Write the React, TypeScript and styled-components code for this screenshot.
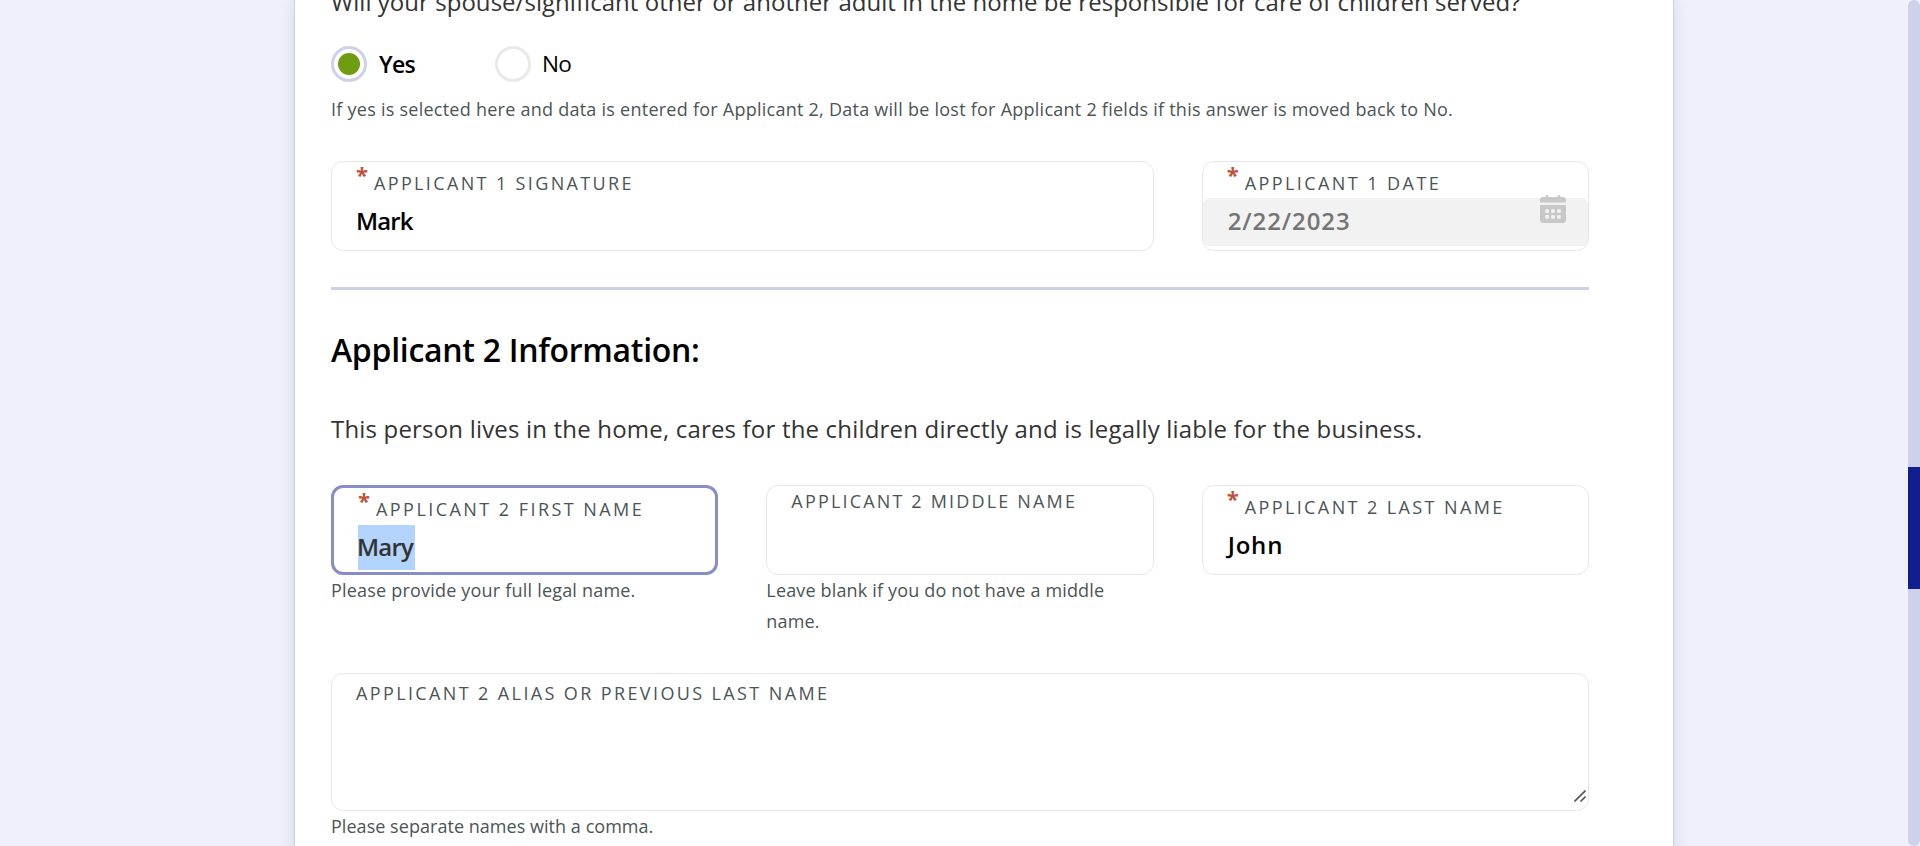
import React from 'react';
import styled, { createGlobalStyle } from 'styled-components';

const GlobalStyle = createGlobalStyle`
  * { box-sizing: border-box; }
  html, body { margin: 0; height: 100%; overflow: hidden; }
  body {
    background: #f0f0fa;
    color: #333;
    font-family: "Trebuchet MS", "Open Sans", sans-serif;
    font-size: 24px;
  }
`;

const Page = styled.div`
  display: flex;
  height: 846px;
  overflow: hidden;
`;

const Content = styled.div`
  flex: 1;
  display: flex;
  padding-left: 295px;
`;

const Card = styled.main`
  width: 1378px;
  height: 900px;
  flex: none;
  padding: 0 84px 0 36px;
  background: #fff;
  box-shadow: 0 0 0 1px #d0d0dc, 0 0 14px rgba(60, 60, 150, 0.16);
`;

const Scrollbar = styled.div`
  width: 12px;
  height: 846px;
  padding-top: 467px;
  border-radius: 6px;
  background: #cfd1e8;
`;

const Thumb = styled.div`
  height: 122px;
  background: #101e8e;
`;

const Paragraph = styled.p<{ $track: number }>`
  margin: 0;
  line-height: 36px;
  white-space: nowrap;
  letter-spacing: ${(p) => p.$track}px;
`;

const Question = styled(Paragraph)`
  margin-top: -16px;
`;

const Intro = styled(Paragraph)`
  margin: 39px 0 38px;
`;

const Heading = styled.h2`
  margin: 38px 0 0;
  color: #000;
  font-size: 32px;
  font-weight: 600;
  line-height: 44px;
  letter-spacing: -0.29px;
`;

const RadioGroup = styled.div`
  display: flex;
  margin: 26px 0 12px;
`;

const Option = styled.label<{ $checked?: boolean }>`
  display: flex;
  width: 164px;
  color: #000;
  font-size: ${(p) => (p.$checked ? 23 : 22.6)}px;
  font-weight: ${(p) => (p.$checked ? 600 : 400)};
  letter-spacing: -0.7px;
  line-height: 36px;
  gap: ${(p) => (p.$checked ? 12 : 11)}px;
`;

const Radio = styled.span<{ $checked?: boolean }>`
  display: grid;
  place-items: center;
  width: 36px;
  height: 36px;
  border: 3px solid ${(p) => (p.$checked ? '#cfd1e9' : '#e9e9e9')};
  border-radius: 50%;
  background: #fff;
`;

const Dot = styled.span`
  width: 22px;
  height: 22px;
  border-radius: 50%;
  background: #6f9c10;
`;

const Help = styled.p<{ $track: number }>`
  margin: 0;
  color: #4a5556;
  font-size: 18px;
  line-height: 31px;
  letter-spacing: ${(p) => p.$track}px;
`;

const FieldGrid = styled.div`
  display: grid;
  grid-template-columns: repeat(3, 1fr);
  column-gap: 48px;
`;

const SignatureRow = styled(FieldGrid)`
  margin-top: 36px;
`;

const AliasRow = styled.div`
  margin-top: 36px;
`;

const Cell = styled.div<{ $span?: number }>`
  grid-column: span ${(p) => p.$span ?? 1};
  min-width: 0;
`;

const Box = styled.div<{ $focused?: boolean; $tall?: boolean }>`
  position: relative;
  height: ${(p) => (p.$tall ? 138 : 90)}px;
  padding-top: ${(p) => (p.$tall ? 4 : 0)}px;
  border: ${(p) => (p.$focused ? '3px solid #878dc7' : '1px solid #e8e8e8')};
  border-radius: 12px;
  background: #fff;
`;

const LabelRow = styled.div`
  display: flex;
  height: 36px;
  padding-left: 24px;
`;

const Star = styled.span`
  width: 18px;
  color: #c0533c;
  font-size: 22px;
  font-weight: 700;
  line-height: 24px;
`;

const Label = styled.span<{ $required?: boolean; $track: number }>`
  padding-top: ${(p) => (p.$required ? 6 : 0)}px;
  color: #4a5556;
  font-size: 18px;
  line-height: 30px;
  white-space: nowrap;
  text-transform: uppercase;
  letter-spacing: ${(p) => p.$track}px;
`;

const Value = styled.div<{ $disabled?: boolean; $track: number; $indent?: number }>`
  height: 48px;
  padding: 0 25px 2px;
  border-radius: 6px;
  background: ${(p) => (p.$disabled ? '#f2f2f2' : 'transparent')};
  color: ${(p) => (p.$disabled ? '#757575' : '#000')};
  font-weight: 600;
  line-height: 46px;
  letter-spacing: ${(p) => p.$track}px;
  text-indent: ${(p) => p.$indent ?? 0}px;
`;

const SelectedText = styled.span`
  display: block;
  width: 57px;
  height: 45px;
  margin: 1px 0 0 -1px;
  background: #b3d4fd;
  color: #333;
  line-height: 44px;
  text-indent: -1px;
`;

const CalendarIcon = styled.svg`
  position: absolute;
  top: 33px;
  right: 22px;
  width: 26px;
  height: 28px;
`;

const Grip = styled.svg`
  position: absolute;
  right: 2px;
  bottom: 8px;
  width: 12px;
  height: 12px;
`;

const Divider = styled.hr`
  height: 3px;
  margin: 36px 0 0;
  border: 0;
  background: #cbd2e7;
`;

interface FieldProps {
  label: string;
  labelTrack: number;
  required?: boolean;
  focused?: boolean;
  tall?: boolean;
  children?: React.ReactNode;
}

function Field({ label, labelTrack, required, focused, tall, children }: FieldProps) {
  return (
    <Box $focused={focused} $tall={tall}>
      <LabelRow>
        {required && <Star>*</Star>}
        <Label $required={required} $track={labelTrack}>{label}</Label>
      </LabelRow>
      {children}
    </Box>
  );
}

function Calendar() {
  return (
    <CalendarIcon viewBox="0 0 26 28" fill="#c8c8c8">
      <path d="M0 7.5V5a3 3 0 0 1 3-3h2.500V1.500a1.500 1.500 0 0 1 3 0V2h9v-.5a1.500 1.500 0 0 1 3 0V2H23a3 3 0 0 1 3 3v2.500z" />
      <path d="M0 10h26v15a3 3 0 0 1-3 3H3a3 3 0 0 1-3-3z" />
      <g fill="#f2f2f2">
        {[14.2, 20].map((y) =>
          [5.2, 11.1, 17].map((x) => <rect key={`${x}-${y}`} x={x} y={y} width="3.8" height="3.8" rx="1" />)
        )}
      </g>
    </CalendarIcon>
  );
}

export default function App() {
  return (
    <>
      <GlobalStyle />
      <Page>
        <Content>
          <Card>
            <Question $track={0.04}>
              Will your spouse/significant other or another adult in the home be responsible for care of children served?
            </Question>
            <RadioGroup>
              <Option $checked>
                <Radio $checked><Dot /></Radio>
                Yes
              </Option>
              <Option>
                <Radio />
                No
              </Option>
            </RadioGroup>
            <Help $track={0.251}>
              If yes is selected here and data is entered for Applicant 2, Data will be lost for Applicant 2 fields if this answer is moved back to No.
            </Help>

            <SignatureRow>
              <Cell $span={2}>
                <Field label="Applicant 1 Signature" labelTrack={2.36} required>
                  <Value $track={-0.9} $indent={-1}>Mark</Value>
                </Field>
              </Cell>
              <Cell>
                <Field label="Applicant 1 Date" labelTrack={2.43} required>
                  <Value $disabled $track={0.9}>2/22/2023</Value>
                  <Calendar />
                </Field>
              </Cell>
            </SignatureRow>

            <Divider />
            <Heading>Applicant 2 Information:</Heading>
            <Intro $track={0.184}>
              This person lives in the home, cares for the children directly and is legally liable for the business.
            </Intro>

            <FieldGrid>
              <Cell>
                <Field label="Applicant 2 First Name" labelTrack={2.45} required focused>
                  <Value $track={-0.8}><SelectedText>Mary</SelectedText></Value>
                </Field>
                <Help $track={0.2}>Please provide your full legal name.</Help>
              </Cell>
              <Cell>
                <Field label="Applicant 2 Middle Name" labelTrack={2.17} />
                <Help $track={0.16}>Leave blank if you do not have a middle name.</Help>
              </Cell>
              <Cell>
                <Field label="Applicant 2 Last Name" labelTrack={2.4} required>
                  <Value $track={0.8} $indent={0}>John</Value>
                </Field>
              </Cell>
            </FieldGrid>

            <AliasRow>
              <Field label="Applicant 2 Alias or Previous Last Name" labelTrack={2.38} tall>
                <Grip viewBox="0 0 12 12" fill="none" stroke="#555" strokeWidth="1.6">
                  <path d="M.5 11.5 11.5.5M6.500 11.500l5-5" />
                </Grip>
              </Field>
              <Help $track={0.04}>Please separate names with a comma.</Help>
            </AliasRow>
          </Card>
        </Content>
        <Scrollbar><Thumb /></Scrollbar>
      </Page>
    </>
  );
}
